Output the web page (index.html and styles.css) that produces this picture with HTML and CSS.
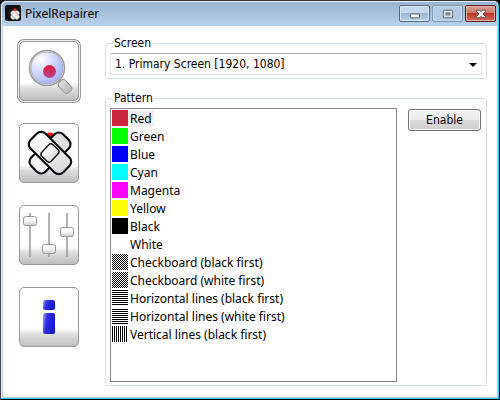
FILE: index.html
```html
<!DOCTYPE html>
<html lang="en">
<head>
<meta charset="utf-8">
<title>PixelRepairer</title>
<link rel="stylesheet" href="styles.css">
</head>
<body>
<div class="window">
  <header class="titlebar">
    <svg class="app-icon" viewBox="0 0 16 16" aria-hidden="true">
      <rect width="16" height="16" rx="2" fill="#111"/>
      <circle cx="10" cy="5" r="1.800" fill="#e22"/>
      <g fill="#eee" stroke="#777" stroke-width=".5">
        <rect x="5" y="7.500" width="10" height="5" rx="2" transform="rotate(-45 10 10)"/>
        <rect x="5" y="7.500" width="10" height="5" rx="2" transform="rotate(45 10 10)"/>
      </g>
    </svg>
    <h1 class="title">PixelRepairer</h1>
    <div class="controls">
      <button class="control" type="button" aria-label="Minimize">
        <svg viewBox="0 0 30 16"><rect x="10.500" y="8.500" width="10" height="4" rx="1" fill="#fff" stroke="#555a66"/></svg>
      </button>
      <button class="control control-disabled" type="button" aria-label="Maximize" disabled>
        <svg viewBox="0 0 30 16"><rect x="10.500" y="4.500" width="10" height="8" rx="1" fill="#e3e8ee" stroke="#555a66"/><rect x="13.500" y="7.500" width="4" height="2" fill="#b8cce2" stroke="#555a66"/></svg>
      </button>
      <button class="control control-close" type="button" aria-label="Close">
        <svg viewBox="0 0 30 16"><path d="M10.500 4.500h4l1 1.500 1-1.500h4v1l-3 3 3 3v1h-4l-1-1.500-1 1.500h-4v-1l3-3-3-3z" fill="#fff" stroke="#574a55"/></svg>
      </button>
    </div>
  </header>
  <main class="client">
    <nav class="tools" aria-label="Tools">
      <button class="tool tool-active" type="button" aria-label="Search for pixels">
        <svg viewBox="0 0 60 60">
          <defs>
            <radialGradient id="lens" cx=".3" cy=".25" r=".8"><stop offset="0" stop-color="#fff"/><stop offset=".45" stop-color="#d5dcff"/><stop offset="1" stop-color="#a2b0fb"/></radialGradient>
            <linearGradient id="dot" x2="0" y2="1"><stop offset="0" stop-color="#e51b38"/><stop offset="1" stop-color="#b8448a"/></linearGradient>
            <linearGradient id="grip"><stop offset="0" stop-color="#e0e0e0"/><stop offset="1" stop-color="#b8b8b8"/></linearGradient>
          </defs>
          <path d="M39 38l4 4" stroke="#999" stroke-width="3"/>
          <rect x="39" y="41" width="14" height="9" rx="3" transform="rotate(47 46 45.500)" fill="url(#grip)" stroke="#999"/>
          <circle cx="28" cy="27" r="17" fill="url(#lens)" stroke="#9c9c9c" stroke-width="2.500"/>
          <circle cx="28" cy="27" r="16.500" fill="none" stroke="#ccc" stroke-width="1"/>
          <circle cx="30.500" cy="30.500" r="6.500" fill="url(#dot)"/>
        </svg>
      </button>
      <button class="tool" type="button" aria-label="Repair pixels">
        <svg viewBox="0 0 60 60">
          <defs><linearGradient id="tape"><stop offset="0" stop-color="#fff"/><stop offset="1" stop-color="#dcdcdc"/></linearGradient></defs>
          <circle cx="31" cy="16" r="6.500" fill="#f00"/>
          <g fill="url(#tape)" stroke="#0b0d10" stroke-width="2.200">
            <rect x="8.500" y="20" width="45" height="20" rx="6" transform="rotate(-45 31 30)"/>
            <rect x="8" y="19.500" width="46" height="21" rx="6" transform="rotate(45 31 30)"/>
          </g>
          <rect x="24.500" y="22" width="13" height="16" rx="3" transform="rotate(43 31 30)" fill="url(#tape)" stroke="#111" stroke-width="1.400"/>
        </svg>
      </button>
      <button class="tool" type="button" aria-label="Settings">
        <svg viewBox="0 0 60 60">
          <defs><linearGradient id="knob" x2="0" y2="1"><stop offset=".4" stop-color="#fff"/><stop offset="1" stop-color="#ccc"/></linearGradient></defs>
          <path d="M11 8v44M30 8v44M48 8v44" stroke="#999" stroke-width="1.500"/>
          <g fill="url(#knob)" stroke="#999"><rect x="4.500" y="11.500" width="13" height="9" rx="2"/><rect x="23.500" y="39.500" width="13" height="9" rx="2"/><rect x="41.500" y="22.500" width="13" height="9" rx="2"/></g>
        </svg>
      </button>
      <button class="tool" type="button" aria-label="Information">
        <svg viewBox="0 0 60 60">
          <defs><linearGradient id="info" x2="1" y2=".3"><stop offset="0" stop-color="#a8acf8"/><stop offset=".4" stop-color="#2c2cdf"/><stop offset="1" stop-color="#1818d2"/></linearGradient></defs>
          <rect x="24" y="13" width="12" height="10" rx="2" fill="url(#info)"/>
          <rect x="24" y="26" width="12" height="21" rx="2" fill="url(#info)"/>
        </svg>
      </button>
    </nav>
    <div class="panels">
      <fieldset class="group">
        <legend><label for="screen">Screen</label></legend>
        <div class="combo">
          <select id="screen"><option>1. Primary Screen [1920, 1080]</option></select>
          <svg class="arrow" viewBox="0 0 8 4" aria-hidden="true"><path d="M0 0h8L4 4z"/></svg>
        </div>
      </fieldset>
      <fieldset class="group group-pattern">
        <legend id="pattern">Pattern</legend>
        <div class="pattern">
          <ul class="list" role="listbox" aria-labelledby="pattern" tabindex="0">
            <li role="option" aria-selected="true"><i class="swatch red"></i><span>Red</span></li>
            <li role="option"><i class="swatch green"></i><span>Green</span></li>
            <li role="option"><i class="swatch blue"></i><span>Blue</span></li>
            <li role="option"><i class="swatch cyan"></i><span>Cyan</span></li>
            <li role="option"><i class="swatch magenta"></i><span>Magenta</span></li>
            <li role="option"><i class="swatch yellow"></i><span>Yellow</span></li>
            <li role="option"><i class="swatch black"></i><span>Black</span></li>
            <li role="option"><i class="swatch white"></i><span>White</span></li>
            <li role="option"><i class="swatch check"></i><span>Checkboard (black first)</span></li>
            <li role="option"><i class="swatch check check-white"></i><span>Checkboard (white first)</span></li>
            <li role="option"><i class="swatch rows"></i><span>Horizontal lines (black first)</span></li>
            <li role="option"><i class="swatch rows rows-white"></i><span>Horizontal lines (white first)</span></li>
            <li role="option"><i class="swatch cols"></i><span>Vertical lines (black first)</span></li>
          </ul>
          <button class="enable" type="button">Enable</button>
        </div>
      </fieldset>
    </div>
  </main>
</div>
</body>
</html>
```

FILE: styles.css
```css
* { box-sizing: border-box; }

body {
  margin: 0;
  background: #000;
  color: #000;
  font: 12px/16px "DejaVu Sans Condensed", "DejaVu Sans", sans-serif;
}

button, select { font: inherit; color: inherit; }

.window {
  display: flex;
  flex-direction: column;
  min-height: 100vh;
  border: 1px solid #000;
  border-top-color: #333;
  border-left-color: #444;
  border-radius: 6px 6px 0 0;
  background: #b9d1ea;
  box-shadow: inset -1px -1px #2fd0f0, inset 1px 1px #e8f4fc;
  padding: 0 2px 2px;
}

.titlebar {
  display: flex;
  align-items: flex-start;
  height: 24px;
  margin: 1px -1px 0;
  padding: 0 2px 0 3px;
  border-radius: 5px 5px 0 0;
  background: linear-gradient(#98b4d2, #b9d1ea);
}

.app-icon { width: 16px; height: 16px; margin-top: 3px; }

.title {
  flex: 1;
  margin: 0 0 0 4px;
  font: 12px/23px "Noto Sans", sans-serif;
}

.controls { display: flex; gap: 2px; margin-top: 3px; }

.control {
  width: 31px;
  height: 17px;
  padding: 0;
  border: 1px solid #526780;
  border-radius: 2px;
  background: linear-gradient(#c5d8eb 45%, #9bb7d3 50%, #b9d1e9);
  box-shadow: inset 0 0 0 1px #dce9f5;
}

.control svg { display: block; width: 100%; height: 100%; }

.control-disabled { border-color: #7e96b2; background: #b2cae3; box-shadow: inset 0 0 0 1px #c8dbef; }

.control-close {
  border-color: #5a1720;
  background: linear-gradient(#dda397, #cc7565 45%, #b83721 50%, #d6705a);
  box-shadow: inset 0 0 0 1px #e3b0a8;
}

.client {
  flex: 1;
  display: flex;
  gap: 24px;
  padding: 9px 10px 11px 14px;
  background: #fff;
}

.tools { display: flex; flex-direction: column; gap: 20px; padding-top: 6px; }

.tool {
  display: flex;
  width: 60px;
  height: 60px;
  margin: 0 2px 2px;
  padding: 0;
  border: 1px solid #999;
  border-radius: 5px;
  background: linear-gradient(#fff 70%, #dedede 80%, #bebebe);
}

.tool svg { width: 60px; height: 60px; margin: -1px; flex: none; }

.tool-active { box-shadow: 0 0 0 1px #f2f2f2, 0 0 0 2px #999; }

.panels { flex: 1; display: flex; flex-direction: column; gap: 11px; min-width: 0; }

.group {
  min-width: 0;
  margin: 0;
  padding: 2px 4px 3px;
  border: 1px solid #d3dfe8;
  border-radius: 4px;
}

.group legend { margin-left: 2px; padding: 0 2px; }

.group-pattern { flex: 1; display: flex; flex-direction: column; }

.combo { position: relative; }

.combo select {
  display: block;
  width: 100%;
  height: 22px;
  padding: 0 20px 0 4px;
  border: 1px solid #dfe3ea;
  border-top-color: #abadb3;
  border-radius: 2px;
  background: #fff;
  appearance: none;
}

.arrow { position: absolute; top: 10px; right: 5px; width: 8px; height: 4px; pointer-events: none; }

.pattern { flex: 1; display: flex; align-items: flex-start; gap: 11px; }

.list {
  flex: 1;
  align-self: stretch;
  margin: 0;
  padding: 1px;
  border: 1px solid #828790;
  list-style: none;
  font: 12px/17px "Noto Sans", sans-serif;
}

.list li { display: flex; height: 18px; }

.list span { padding: 0 2px; height: 17px; }

.list [aria-selected="true"] span { background: #f0f0f0; }

.swatch { width: 16px; height: 16px; }
.red { background: #cc2540; }
.green { background: #0f0; }
.blue { background: #00f; }
.cyan { background: #0ff; }
.magenta { background: #f0f; }
.yellow { background: #ff0; }
.black { background: #000; }
.white { background: #fff; }
.check { background: repeating-conic-gradient(#fff 0 25%, #000 0 50%) 0 0 / 2px 2px; }
.check-white { background-position: 1px 0; }
.rows { background: linear-gradient(#000 50%, #fff 50%) 0 0 / 2px 2px; }
.rows-white { background-position: 0 1px; }
.cols { background: linear-gradient(90deg, #000 50%, #fff 50%) 0 0 / 2px 2px; }

.enable {
  width: 73px;
  height: 22px;
  margin: 1px 1px 0 0;
  padding: 0;
  border: 1px solid #707070;
  border-radius: 3px;
  background: linear-gradient(#f2f2f2, #ebebeb 50%, #dadada 52%, #cfcfcf);
  box-shadow: inset 0 0 0 1px #fafafa;
}
```
